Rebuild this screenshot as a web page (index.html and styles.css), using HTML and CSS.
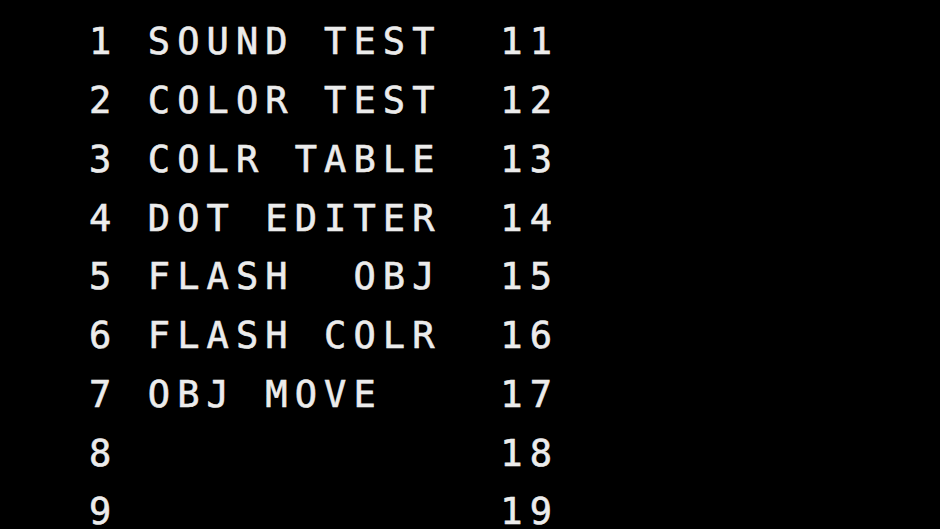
FILE: index.html
```html
<!DOCTYPE html>
<html>
<head>
<meta charset="utf-8">
<title>Test Menu</title>
<link rel="stylesheet" href="styles.css">
</head>
<body>
<main class="screen">
  <ol class="menu">
    <li class="line">1 SOUND TEST  11</li>
    <li class="line">2 COLOR TEST  12</li>
    <li class="line">3 COLR TABLE  13</li>
    <li class="line">4 DOT EDITER  14</li>
    <li class="line">5 FLASH  OBJ  15</li>
    <li class="line">6 FLASH COLR  16</li>
    <li class="line">7 OBJ MOVE    17</li>
    <li class="line">8             18</li>
    <li class="line">9             19</li>
  </ol>
</main>
</body>
</html>
```
FILE: styles.css
```css
html, body {
  margin: 0;
  padding: 0;
  background: #000;
  width: 940px;
  height: 529px;
  overflow: hidden;
}

.screen {
  width: 940px;
  height: 529px;
  background: #000;
  padding: 25.4px 0 0 89px;
  box-sizing: border-box;
}

/* rows sit on a 58.75px pitch; each line box hugs its glyphs */
.menu {
  list-style: none;
  margin: 0;
  padding: 0;
  display: flex;
  flex-direction: column;
  gap: 25.25px;
}

/* character cells are 29.375px wide */
.line {
  font-family: "DejaVu Sans Mono", monospace;
  font-size: 37px;
  line-height: 33.5px;
  height: 33.5px;
  letter-spacing: 7.1px;
  white-space: pre;
  color: #ececec;
  -webkit-text-stroke: 0.6px #ececec;
}
```
